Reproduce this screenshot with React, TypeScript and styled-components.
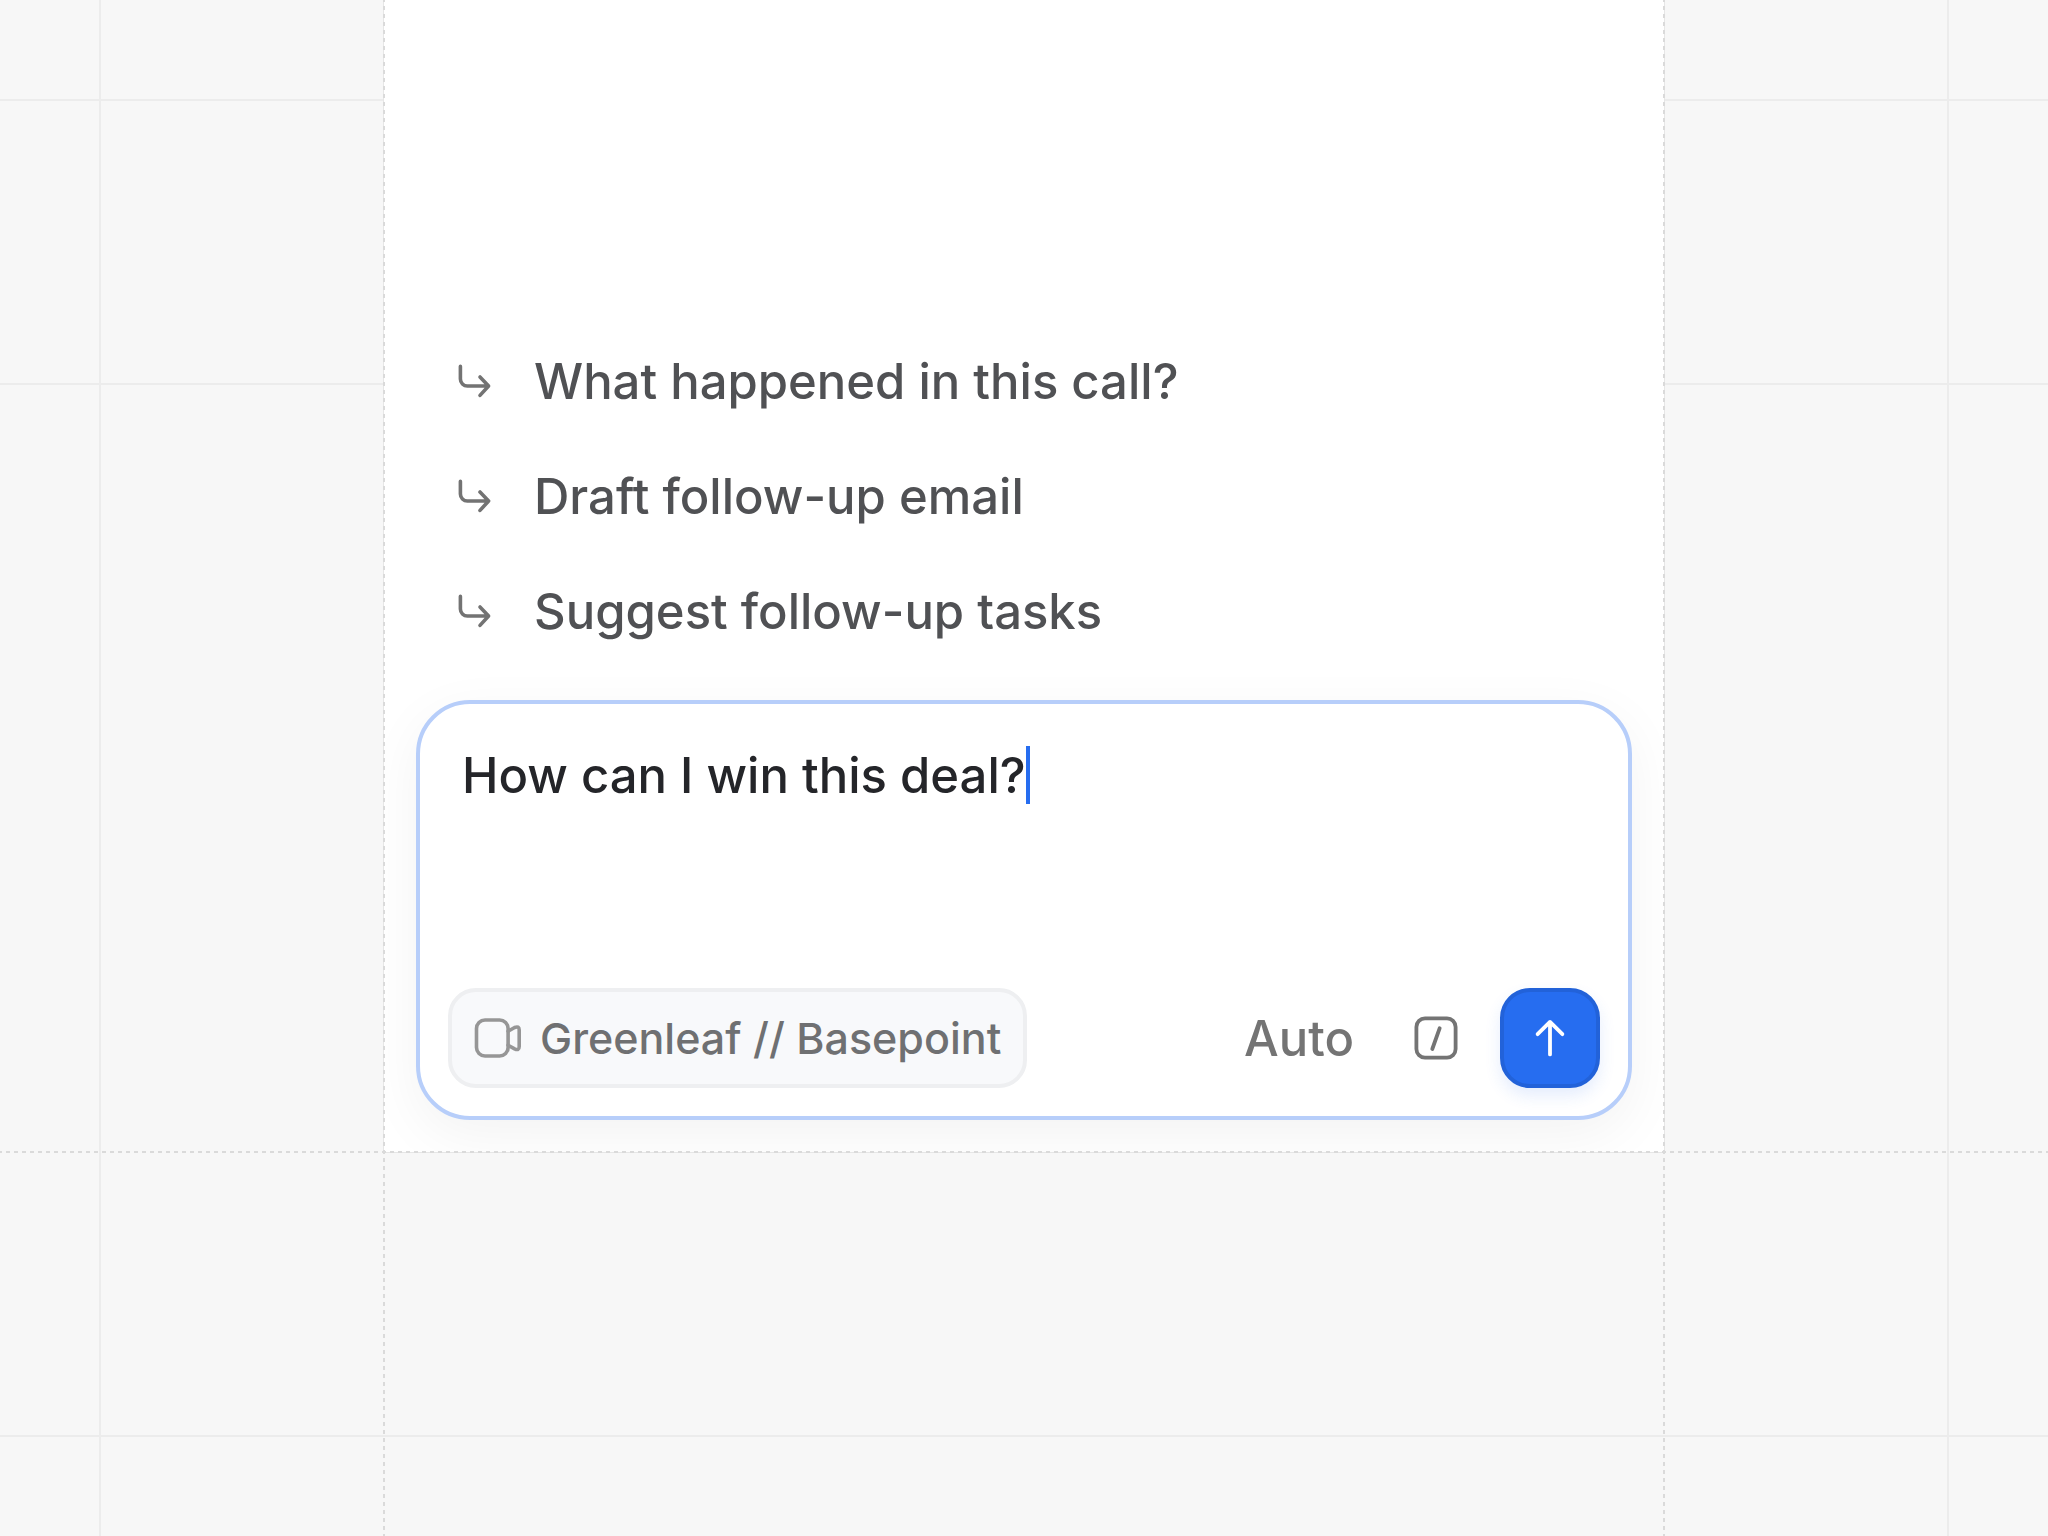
import React, { useState } from "react";
import styled, { createGlobalStyle } from "styled-components";

const GlobalStyle = createGlobalStyle`
  *, *::before, *::after { box-sizing: border-box; }
  body { margin: 0; background: #f7f7f7; }
  button, textarea { font: inherit; color: inherit; letter-spacing: inherit; }
`;

const line = "linear-gradient(#ececec, #ececec)";
const dash = (dir: string) =>
  `repeating-linear-gradient(${dir}, #dadada 0 2px, transparent 2px 6px, #dadada 6px 8px)`;

const Page = styled.div`
  position: relative;
  display: grid;
  grid-template-columns: 3fr 10fr 3fr;
  grid-template-rows: 3fr 1fr;
  min-height: 100vh;
  font-family: Inter, "Liberation Sans", sans-serif;
  background-color: #f7f7f7;
  background-image: ${line}, ${line}, ${line}, ${line}, ${line};
  background-repeat: no-repeat;
  background-size: 2px 100%, 2px 100%, 100% 2px, 100% 2px, 100% 2px;
  background-position:
    99px 0,
    right 99px top 0,
    0 99px,
    0 383px,
    left 0 bottom 99px;

  &::after {
    content: "";
    position: absolute;
    inset: 0;
    pointer-events: none;
    background-image: ${dash("to bottom")}, ${dash("to bottom")}, ${dash("to right")};
    background-repeat: no-repeat;
    background-size: 2px 100%, 2px 100%, 100% 2px;
    background-position:
      calc((100% + 2px) * 3 / 16 - 1px) 0,
      calc((100% + 2px) * 13 / 16 - 1px) 0,
      0 calc((100% + 2px) * 3 / 4 - 1px);
  }
`;

const Panel = styled.main`
  grid-column: 2;
  display: flex;
  flex-direction: column;
  justify-content: flex-end;
  gap: 32px;
  padding: 32px;
  overflow: hidden;
  background: #ffffff;
  outline: 1px solid #e6e6e6;
`;

const Suggestions = styled.ul`
  margin: 0;
  padding: 0;
  list-style: none;
`;

const Suggestion = styled.button`
  display: flex;
  align-items: center;
  gap: 42px;
  width: 100%;
  height: 115px;
  padding: 2px 40px 0;
  border: 0;
  background: none;
  color: #505154;
  font-size: 49px;
  font-weight: 500;
  text-align: left;
  cursor: pointer;
`;

const Composer = styled.form`
  display: flex;
  flex-direction: column;
  justify-content: space-between;
  height: 420px;
  padding: 42px 28px 28px;
  border: 4px solid #b7cefa;
  border-radius: 54px;
  background: #ffffff;
  box-shadow: 0 16px 56px rgba(0, 0, 0, 0.05);
`;

const Prompt = styled.div`
  display: flex;
  padding: 0 14px;
  font-size: 49px;
  line-height: 60px;
  color: #242529;
`;

const PromptInput = styled.textarea`
  field-sizing: content;
  display: block;
  max-width: 100%;
  padding: 0;
  border: 0;
  outline: 0;
  resize: none;
  overflow: hidden;
  background: none;
  caret-color: transparent;
  font-weight: 500;
`;

const Caret = styled.span`
  flex: none;
  width: 4px;
  height: 58px;
  background: #266df0;
`;

const Toolbar = styled.div`
  display: flex;
  align-items: center;
`;

const Chip = styled.button`
  display: flex;
  align-items: center;
  gap: 18px;
  height: 100px;
  margin-right: auto;
  padding: 0 22px;
  border: 4px solid #eeeff1;
  border-radius: 28px;
  background: #f8f9fb;
  color: #6f7072;
  font-size: 43px;
  font-weight: 500;
  cursor: pointer;
`;

const ModeButton = styled.button`
  height: 100px;
  padding: 0 32px;
  border: 0;
  background: none;
  color: #747474;
  font-size: 49px;
  font-weight: 500;
  cursor: pointer;
`;

const IconButton = styled.button`
  display: grid;
  place-items: center;
  width: 100px;
  height: 100px;
  margin-right: 14px;
  padding: 0;
  border: 0;
  background: none;
  color: #747474;
  cursor: pointer;
`;

const SendButton = styled.button`
  display: grid;
  place-items: center;
  width: 100px;
  height: 100px;
  padding: 0;
  border: 4px solid #2262d9;
  border-radius: 30px;
  background: #266df0;
  color: #ffffff;
  box-shadow: 0 8px 16px rgba(38, 109, 240, 0.12);
  cursor: pointer;
`;

const Icon = styled.svg`
  display: block;
  flex: none;
  fill: none;
  stroke: currentColor;
  stroke-linecap: round;
  stroke-linejoin: round;
`;

const ReplyArrow = () => (
  <Icon width="36" height="36" viewBox="0 0 36 36" strokeWidth="3.6" color="#737373" aria-hidden="true">
    <path d="M4.4 2.4v12.6a7 7 0 0 0 7 7H32.4M24 13l8.6 9L24 31.4" />
  </Icon>
);

const VideoIcon = () => (
  <Icon width="48" height="40" viewBox="0 0 48 40" strokeWidth="3.6" color="#969696" aria-hidden="true">
    <rect x="2.5" y="2" width="31.6" height="36" rx="8.5" />
    <path d="M34.1 13.2L40.6 9.5Q45.2 7.6 45.2 12V28.6Q45.2 33 40.6 30.9L34.1 27.2" />
  </Icon>
);

const SlashIcon = () => (
  <Icon width="44" height="44" viewBox="0 0 44 44" strokeWidth="3.8" aria-hidden="true">
    <rect x="2.4" y="2.4" width="39.2" height="39.2" rx="8.6" />
    <path d="M25.7 12.2L18.3 33" />
  </Icon>
);

const SendIcon = () => (
  <Icon width="36" height="40" viewBox="0 0 36 40" strokeWidth="3.8" aria-hidden="true">
    <path d="M18 36.4V4M5.6 16.2L18 3.9L30.4 16.2" />
  </Icon>
);

const suggestions = [
  "What happened in this call?",
  "Draft follow-up email",
  "Suggest follow-up tasks",
];

export default function App() {
  const [prompt, setPrompt] = useState("How can I win this deal?");

  return (
    <>
      <GlobalStyle />
      <Page>
        <Panel>
          <Suggestions>
            {suggestions.map((text) => (
              <li key={text}>
                <Suggestion type="button" onClick={() => setPrompt(text)}>
                  <ReplyArrow />
                  {text}
                </Suggestion>
              </li>
            ))}
          </Suggestions>
          <Composer onSubmit={(event) => event.preventDefault()}>
            <Prompt>
              <PromptInput
                aria-label="Ask a question"
                rows={1}
                value={prompt}
                onChange={(event) => setPrompt(event.target.value)}
              />
              <Caret />
            </Prompt>
            <Toolbar>
              <Chip type="button">
                <VideoIcon />
                Greenleaf // Basepoint
              </Chip>
              <ModeButton type="button" aria-haspopup="listbox">
                Auto
              </ModeButton>
              <IconButton type="button" aria-label="Commands">
                <SlashIcon />
              </IconButton>
              <SendButton type="submit" aria-label="Send">
                <SendIcon />
              </SendButton>
            </Toolbar>
          </Composer>
        </Panel>
      </Page>
    </>
  );
}
